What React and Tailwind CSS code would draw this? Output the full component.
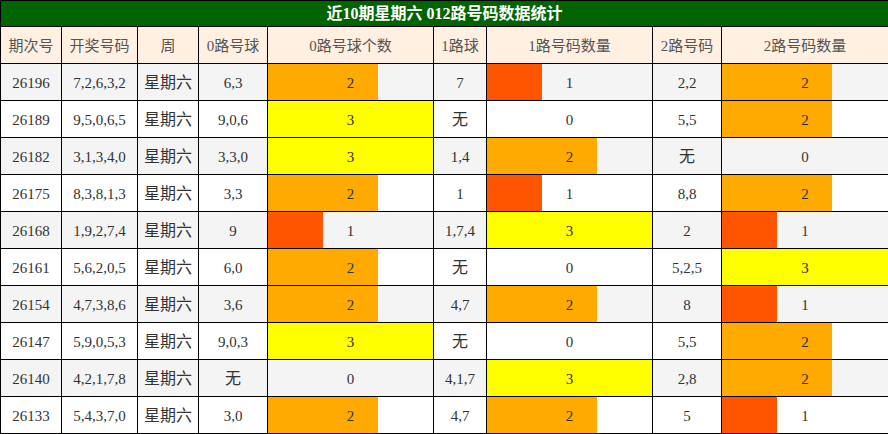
import React from "react";

const rows = [
  ["26196", "7,2,6,3,2", "星期六", "6,3", 2, "7", 1, "2,2", 2],
  ["26189", "9,5,0,6,5", "星期六", "9,0,6", 3, "无", 0, "5,5", 2],
  ["26182", "3,1,3,4,0", "星期六", "3,3,0", 3, "1,4", 2, "无", 0],
  ["26175", "8,3,8,1,3", "星期六", "3,3", 2, "1", 1, "8,8", 2],
  ["26168", "1,9,2,7,4", "星期六", "9", 1, "1,7,4", 3, "2", 1],
  ["26161", "5,6,2,0,5", "星期六", "6,0", 2, "无", 0, "5,2,5", 3],
  ["26154", "4,7,3,8,6", "星期六", "3,6", 2, "4,7", 2, "8", 1],
  ["26147", "5,9,0,5,3", "星期六", "9,0,3", 3, "无", 0, "5,5", 2],
  ["26140", "4,2,1,7,8", "星期六", "无", 0, "4,1,7", 3, "2,8", 2],
  ["26133", "5,4,3,7,0", "星期六", "3,0", 2, "4,7", 2, "5", 1],
];

const headers = ["期次号", "开奖号码", "周", "0路号球", "0路号球个数", "1路球", "1路号码数量", "2路号码", "2路号码数量"];

const barColor = { 1: "#FF5500", 2: "#FFAA00", 3: "#FFFF00" };

function Cell({ children, bg, big }) {
  return (
    <div className={`${bg} flex items-center justify-center pt-[2px] text-[#333] ${big ? "text-[16px]" : "text-[15px]"}`}>
      {children}
    </div>
  );
}

function BarCell({ count, bg }) {
  const width = count === 3 ? "100%" : `${count * 55}px`;
  return (
    <div className={`${bg} relative flex items-center justify-center pt-[2px] text-[15px] text-[#333]`}>
      {count > 0 && (
        <div className="absolute left-0 top-0 h-full" style={{ width, background: barColor[count] }} />
      )}
      <span className="relative">{count}</span>
    </div>
  );
}

export default function App() {
  return (
    <div
      className="w-[888px] h-[434px] bg-black pt-px pl-px pb-px flex flex-col gap-px"
      style={{ fontFamily: '"Liberation Serif", "Noto Sans CJK SC", serif' }}
    >
      <div className="h-[25px] bg-[#006400] flex items-center justify-center text-white font-bold text-[16px]">
        近10期星期六 012路号码数据统计
      </div>
      <div className="grid grid-cols-[60px_75px_60px_68px_165px_52px_165px_68px_166px] auto-rows-[36px] gap-px">
        {headers.map((h) => (
          <div key={h} className="bg-[#FFF0E1] flex items-center justify-center pt-[2px] text-[15px] text-[#555]">
            {h}
          </div>
        ))}
        {rows.map((r, i) => {
          const bg = i % 2 === 0 ? "bg-[#F4F4F4]" : "bg-white";
          return (
            <React.Fragment key={r[0]}>
              <Cell bg={bg}>{r[0]}</Cell>
              <Cell bg={bg}>{r[1]}</Cell>
              <Cell bg={bg} big>{r[2]}</Cell>
              <Cell bg={bg} big={r[3] === "无"}>{r[3]}</Cell>
              <BarCell bg={bg} count={r[4]} />
              <Cell bg={bg} big={r[5] === "无"}>{r[5]}</Cell>
              <BarCell bg={bg} count={r[6]} />
              <Cell bg={bg} big={r[7] === "无"}>{r[7]}</Cell>
              <BarCell bg={bg} count={r[8]} />
            </React.Fragment>
          );
        })}
      </div>
    </div>
  );
}
